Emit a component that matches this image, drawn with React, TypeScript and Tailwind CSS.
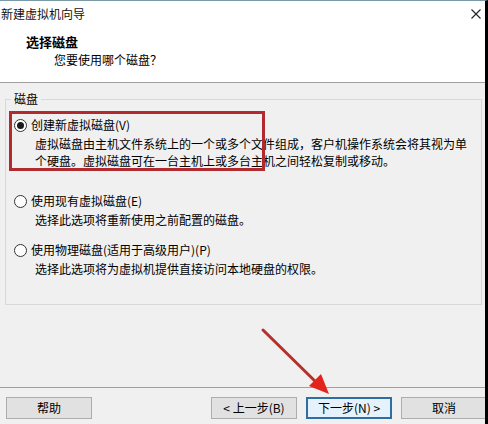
import type { ReactNode } from "react";

type DiskOption = {
    label: string;
    desc: string[];
    checked?: boolean;
    gap: string;
};

const options: DiskOption[] = [
    {
        label: "创建新虚拟磁盘(V)",
        desc: [
            "虚拟磁盘由主机文件系统上的一个或多个文件组成，客户机操作系统会将其视为单",
            "个硬盘。虚拟磁盘可在一台主机上或多台主机之间轻松复制或移动。",
        ],
        checked: true,
        gap: "mt-[9px]",
    },
    {
        label: "使用现有虚拟磁盘(E)",
        desc: ["选择此选项将重新使用之前配置的磁盘。"],
        gap: "mt-[23px]",
    },
    {
        label: "使用物理磁盘(适用于高级用户)(P)",
        desc: ["选择此选项将为虚拟机提供直接访问本地硬盘的权限。"],
        gap: "mt-[13px]",
    },
];

function Radio({ checked }: { checked?: boolean }) {
    return (
        <span className="flex h-[13px] w-[13px] shrink-0 items-center justify-center rounded-full border border-[#333333] bg-white">
            {checked && <span className="h-[7px] w-[7px] rounded-full bg-[#1a1a1a]" />}
        </span>
    );
}

function Button({ children, primary, className }: { children: ReactNode; primary?: boolean; className?: string }) {
    return (
        <div
            className={
                "flex h-[22px] w-[86px] shrink-0 items-center justify-center text-[12px] leading-none text-black " +
                (primary
                    ? "border-2 border-[#2f6ea5] bg-[#e5f1fb] "
                    : "border border-[#adadad] bg-[#e1e1e1] ") +
                (className ?? "")
            }
        >
            {children}
        </div>
    );
}

export default function App() {
    return (
        <div className="relative flex h-[424px] w-[488px] flex-col overflow-hidden border-t border-r-[3px] border-t-[#7a9aa5] border-r-black bg-[#f0f0f0] font-['Noto_Sans_CJK_SC','Noto_Sans',sans-serif] text-black">
            {/* title bar */}
            <div className="flex h-[25px] items-center justify-between bg-white pl-[1px] pr-[4px]">
                <span className="text-[12px] leading-[16px] text-[#111]">新建虚拟机向导</span>
                <svg width="10" height="10" viewBox="0 0 10 10" className="mt-[1px]">
                    <path d="M0.5 0.5 L9.5 9.5 M9.5 0.5 L0.5 9.5" stroke="#222" strokeWidth="1.1" />
                </svg>
            </div>

            {/* header */}
            <div className="h-[57px] border-b border-[#a0a0a0] bg-white">
                <div className="mt-[7px] pl-[26px] text-[13px] font-bold leading-[18px]">选择磁盘</div>
                <div className="mt-[1px] pl-[54px] text-[12px] leading-[16px]">您要使用哪个磁盘？</div>
            </div>

            {/* disk group */}
            <fieldset className="mt-[8px] ml-[5px] mr-[3px] border border-[#d8d8d8] pl-[5px] pb-[27px]">
                <legend className="px-[3px] text-[12px] leading-[16px]">磁盘</legend>
                {options.map((opt) => (
                    <div key={opt.label} className={opt.gap}>
                        <div className="flex items-center gap-[4px] pl-[3px]">
                            <Radio checked={opt.checked} />
                            <span className="text-[12px] leading-[18px]">{opt.label}</span>
                        </div>
                        <div className="mt-[1px] pl-[24px] text-[12px] leading-[17px]">
                            {opt.desc.map((line) => (
                                <div key={line} className="whitespace-nowrap">
                                    {line}
                                </div>
                            ))}
                        </div>
                    </div>
                ))}
            </fieldset>

            <div className="flex-1" />

            {/* footer */}
            <div className="flex h-[37px] items-start border-t border-[#a0a0a0] pt-[9px]">
                <Button className="ml-[6px]">帮助</Button>
                <div className="flex-1" />
                <div className="mr-[-2px] flex gap-[9px]">
                    <Button>&lt; 上一步(B)</Button>
                    <Button primary>下一步(N) &gt;</Button>
                    <Button>取消</Button>
                </div>
            </div>

            {/* annotation: red frame and arrow */}
            <div className="pointer-events-none absolute left-[9px] top-[110px] h-[60px] w-[256px] border-[3px] border-[#b02a2e]" />
            <svg className="pointer-events-none absolute left-0 top-0" width="488" height="424" viewBox="0 0 488 424">
                <line x1="263" y1="329" x2="320" y2="385" stroke="#b5302c" strokeWidth="3" strokeLinecap="round" />
                <path d="M329 393 L309 385 L321 373 Z" fill="#e3241c" />
            </svg>
        </div>
    );
}
